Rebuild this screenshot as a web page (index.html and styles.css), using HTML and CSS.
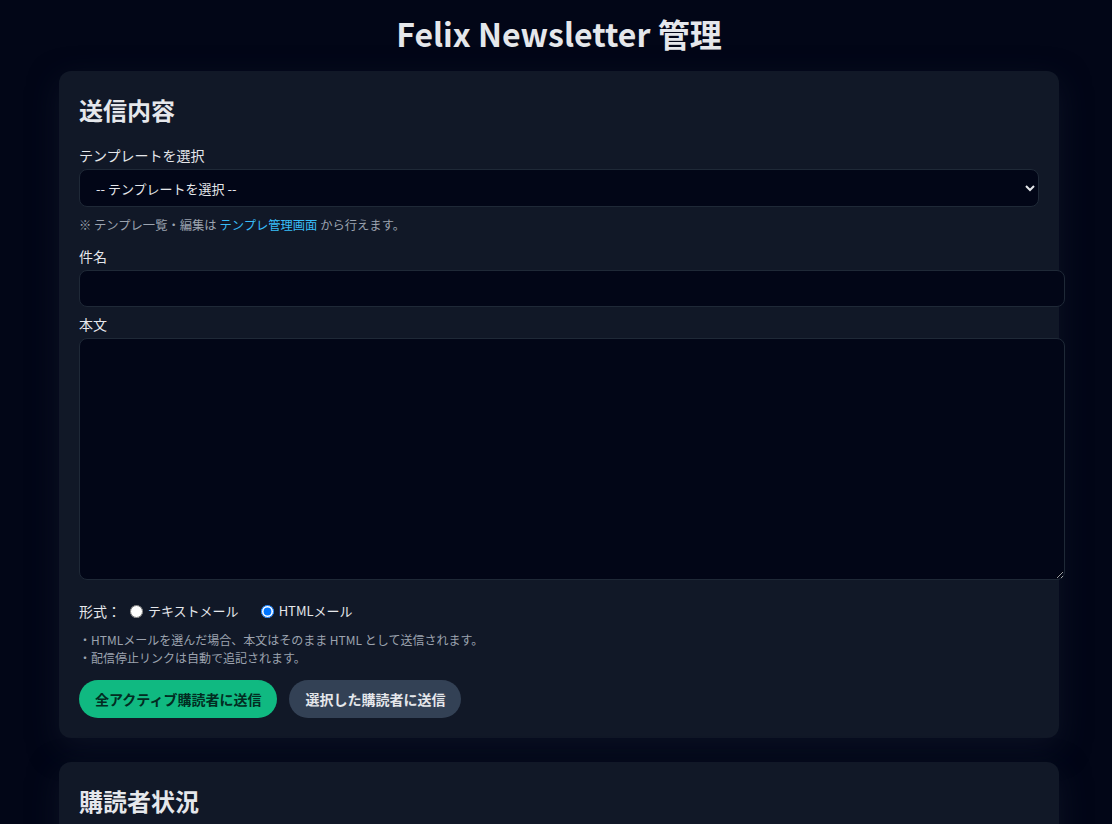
FILE: index.html
```html
<!DOCTYPE html>
<html lang="ja">
<head>
<meta charset="utf-8">
<title>Felix Newsletter 管理</title>
<link rel="stylesheet" href="styles.css">
</head>
<body>
<div class="page">
  <h1 class="title">Felix Newsletter 管理</h1>

  <section class="card">
    <h2 class="card-title">送信内容</h2>

    <label class="field-label" for="tpl">テンプレートを選択</label>
    <select id="tpl" class="select">
      <option>-- テンプレートを選択 --</option>
    </select>
    <p class="note">※ テンプレ一覧・編集は <a href="#" class="link">テンプレ管理画面</a> から行えます。</p>

    <label class="field-label" for="subject">件名</label>
    <input id="subject" class="input" type="text">

    <label class="field-label" for="body">本文</label>
    <textarea id="body" class="textarea"></textarea>

    <div class="format-row">
      <span class="format-label">形式：</span>
      <label class="radio"><input type="radio" name="fmt">テキストメール</label>
      <label class="radio"><input type="radio" name="fmt" checked>HTMLメール</label>
    </div>

    <div class="hints">
      <div>・HTMLメールを選んだ場合、本文はそのまま HTML として送信されます。</div>
      <div>・配信停止リンクは自動で追記されます。</div>
    </div>

    <div class="actions">
      <button class="btn btn-primary">全アクティブ購読者に送信</button>
      <button class="btn btn-secondary">選択した購読者に送信</button>
    </div>
  </section>

  <section class="card card-tall">
    <h2 class="card-title">購読者状況</h2>
  </section>
</div>
</body>
</html>
```

FILE: styles.css
```css
* { box-sizing: content-box; }

html, body {
  background: #020617;
}

body {
  margin: 0;
  padding: 0 0 40px 6px;
  color: #e5e7eb;
  font-family: "Noto Sans CJK JP", "Noto Sans", sans-serif;
  font-size: 14px;
}

.page {
  max-width: 1000px;
  margin: 0 auto;
}

.title {
  margin: 0;
  padding: 12px 0 17px;
  text-align: center;
  font-size: 32px;
  font-weight: 700;
  line-height: 42px;
  color: #e5e7eb;
}

.card {
  background: #111827;
  border-radius: 12px;
  padding: 20px;
  margin-bottom: 24px;
  box-shadow: 0 10px 30px rgba(15, 23, 42, 0.7);
}

.card-tall {
  min-height: 120px;
}

.card-title {
  margin: 0 0 16px;
  font-size: 24px;
  font-weight: 700;
  line-height: 38px;
  color: #e5e7eb;
}

.field-label {
  display: block;
  font-size: 14px;
  line-height: 20px;
  margin-bottom: 4px;
}

.select {
  display: block;
  width: 100%;
  box-sizing: border-box;
  height: 38px;
  padding: 0 12px;
  background: #020617;
  color: #e5e7eb;
  border: 1px solid #1f2937;
  border-radius: 8px;
  font-family: inherit;
  font-size: 13px;
}

.note {
  margin: 8px 0 11px;
  font-size: 12.3px;
  line-height: 20px;
  color: #9ca3af;
}

.link {
  color: #38bdf8;
  text-decoration: none;
}

.input,
.textarea {
  display: block;
  width: 100%;
  padding: 8px 12px;
  background: #020617;
  color: #e5e7eb;
  border: 1px solid #1f2937;
  border-radius: 8px;
  font-family: inherit;
  font-size: 14px;
}

.input {
  height: 19px;
  margin-bottom: 7px;
}

.textarea {
  height: 224px;
  resize: vertical;
  margin-bottom: 21px;
}

.format-row {
  display: flex;
  align-items: center;
  font-size: 14px;
  line-height: 20px;
}

.format-label {
  margin-right: 6px;
}

.radio {
  display: inline-flex;
  align-items: center;
  margin-right: 19px;
  font-size: 13px;
}

.radio input {
  margin: 0 5px 0 3px;
  width: 13px;
  height: 13px;
}

.hints {
  margin-top: 10px;
  font-size: 12px;
  line-height: 18px;
  color: #9ca3af;
}

.actions {
  display: flex;
  gap: 12px;
  margin-top: 13px;
}

.btn {
  height: 38px;
  padding: 0 16px;
  border: none;
  border-radius: 999px;
  font-family: inherit;
  font-size: 14px;
  font-weight: 700;
  cursor: pointer;
}

.btn-primary {
  background: #10b981;
  color: #022c22;
}

.btn-secondary {
  background: #334155;
  color: #e5e7eb;
}
```
